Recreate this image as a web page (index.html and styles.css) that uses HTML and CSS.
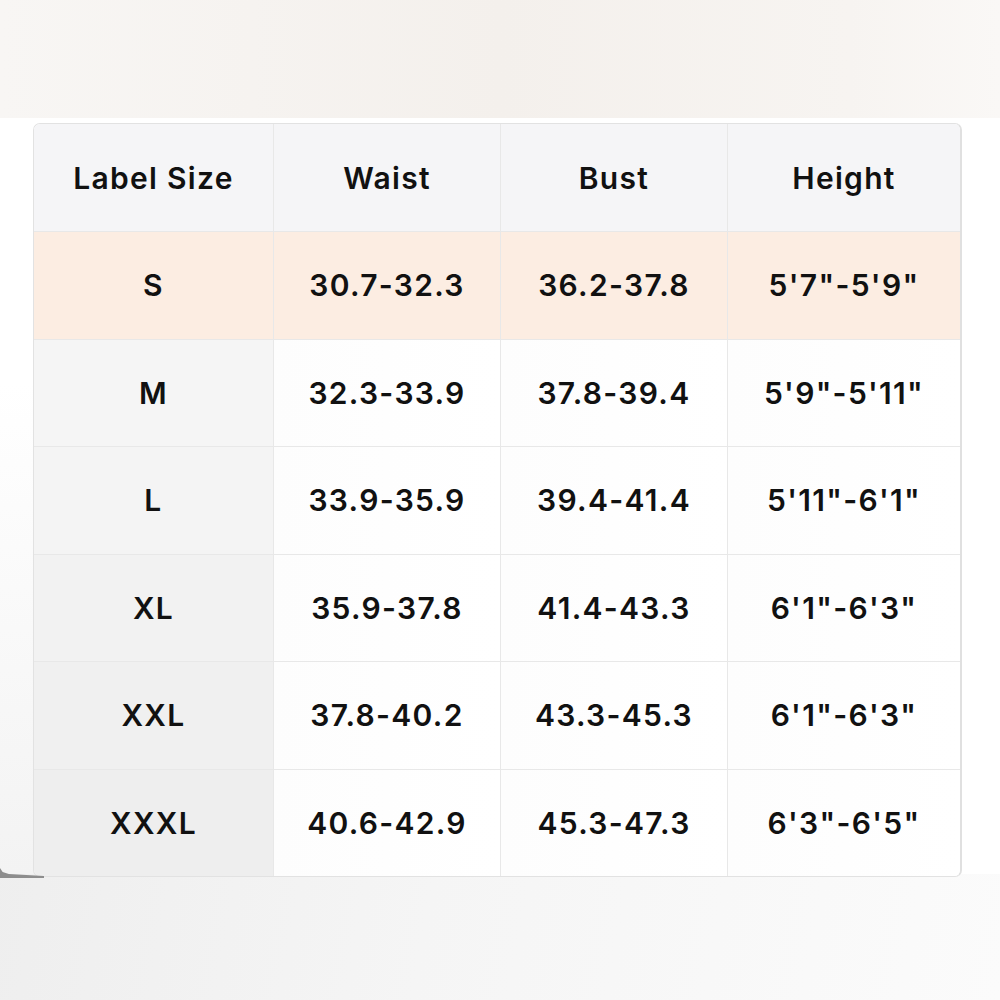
FILE: index.html
```html
<!DOCTYPE html>
<html>
<head>
<meta charset="utf-8">
<link rel="stylesheet" href="styles.css">
</head>
<body>
<div class="page">
  <div class="topband"></div>
  <div class="main">
    <div class="shadow-tab"></div>
    <div class="chart">
      <div class="row head">
        <div class="cell first">Label Size</div>
        <div class="cell">Waist</div>
        <div class="cell">Bust</div>
        <div class="cell">Height</div>
      </div>
      <div class="row hl">
        <div class="cell first">S</div>
        <div class="cell">30.7-32.3</div>
        <div class="cell">36.2-37.8</div>
        <div class="cell">5'7"-5'9"</div>
      </div>
      <div class="row">
        <div class="cell first">M</div>
        <div class="cell">32.3-33.9</div>
        <div class="cell">37.8-39.4</div>
        <div class="cell">5'9"-5'11"</div>
      </div>
      <div class="row">
        <div class="cell first">L</div>
        <div class="cell">33.9-35.9</div>
        <div class="cell">39.4-41.4</div>
        <div class="cell">5'11"-6'1"</div>
      </div>
      <div class="row">
        <div class="cell first">XL</div>
        <div class="cell">35.9-37.8</div>
        <div class="cell">41.4-43.3</div>
        <div class="cell">6'1"-6'3"</div>
      </div>
      <div class="row">
        <div class="cell first">XXL</div>
        <div class="cell">37.8-40.2</div>
        <div class="cell">43.3-45.3</div>
        <div class="cell">6'1"-6'3"</div>
      </div>
      <div class="row">
        <div class="cell first">XXXL</div>
        <div class="cell">40.6-42.9</div>
        <div class="cell">45.3-47.3</div>
        <div class="cell">6'3"-6'5"</div>
      </div>
    </div>
  </div>
</div>
</body>
</html>
```
FILE: styles.css
```css
html, body {
  margin: 0;
  padding: 0;
}
body {
  width: 1000px;
  height: 1000px;
  overflow: hidden;
  font-family: Inter, "Liberation Sans", sans-serif;
  background: linear-gradient(100deg, #ececec 0%, #f5f5f5 50%, #fbfbfb 100%);
}
.page {
  display: flex;
  flex-direction: column;
}
.topband {
  height: 118px;
  background: linear-gradient(90deg, #f8f6f4 0%, #f4f0ec 50%, #f7f4f1 85%, #faf8f6 100%);
}
.main {
  position: relative;
  padding: 5px 0 0 33px;
  background:
    linear-gradient(90deg, rgba(255,255,255,0) 0%, rgba(255,255,255,0) 90%, #ffffff 96%),
    linear-gradient(180deg, #ffffff 0%, #ffffff 35%, #f3f3f3 100%);
  background-repeat: no-repeat;
  background-size: 100% 756px;
}
.shadow-tab {
  position: absolute;
  left: 0;
  top: 750px;
  width: 44px;
  height: 10px;
  background: #8d8d8d;
  clip-path: polygon(0 0, 6% 40%, 20% 60%, 100% 80%, 100% 100%, 0 100%);
}
.chart {
  width: 926px;
  border: 1px solid #e2e2e2;
  border-right: 2px solid #e0e0e0;
  border-radius: 7px;
  overflow: hidden;
  background: #ffffff;
  display: flex;
  flex-direction: column;
}
.row {
  display: grid;
  grid-template-columns: 239px 227px 227px 1fr;
  height: 107.5px;
  box-sizing: border-box;
  border-top: 1px solid #e8e8e8;
}
.row.head {
  height: 107px;
  border-top: none;
}
.cell {
  display: flex;
  align-items: center;
  justify-content: center;
  font-size: 30px;
  font-weight: 600;
  letter-spacing: 1.3px;
  color: #111111;
  border-left: 1px solid #e8e8e8;
}
.cell.first {
  border-left: none;
  background: #f3f3f3;
}
.head .cell,
.head .cell.first {
  background: #f5f5f7;
}
.hl .cell,
.hl .cell.first {
  background: #fcede2;
}
.row:nth-child(3) .first { background: #f5f5f5; }
.row:nth-child(4) .first { background: #f4f4f4; }
.row:nth-child(5) .first { background: #f2f2f2; }
.row:nth-child(6) .first { background: #f0f0f0; }
.row:nth-child(7) .first { background: #eeeeee; }
.row:nth-child(n+3) .cell:not(.first) {
  background: linear-gradient(90deg, #fdfdfd, #ffffff);
}
```
